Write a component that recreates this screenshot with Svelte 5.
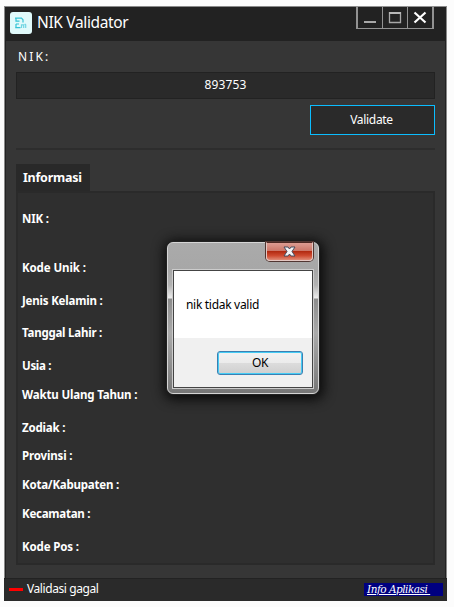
<script>
  const fields = [
    { label: 'NIK :', gap: 18, w: -0.2 },
    { label: 'Kode Unik :', gap: 33, w: -0.1 },
    { label: 'Jenis Kelamin :', gap: 17, w: -0.2 },
    { label: 'Tanggal Lahir :', gap: 16, w: -0.23 },
    { label: 'Usia :', gap: 17, w: -0.3 },
    { label: 'Waktu Ulang Tahun :', gap: 13, w: -0.16 },
    { label: 'Zodiak :', gap: 17, w: -0.2 },
    { label: 'Provinsi :', gap: 12, w: -0.15 },
    { label: 'Kota/Kabupaten :', gap: 13, w: -0.22 },
    { label: 'Kecamatan :', gap: 13, w: -0.25 },
    { label: 'Kode Pos :', gap: 17, w: -0.15 }
  ];
  let nik = $state('893753');
</script>

<div class="screen">
  <main class="window">
    <header class="titlebar">
      <span class="logo">
        <svg width="22" height="22" viewBox="0 0 22 22" fill="none">
          <path d="M5 6.2h6.5l1.5 1.6v2.7M6 6v3.2h3.5M6 12v3.5M5.2 15.6h5.3M6 12h3" stroke="#35c3d5" stroke-width="1.2" />
          <path d="M11.5 16v-3.2h2.2V16M15.7 16v-3.2l-1-1" stroke="#6fd5e2" stroke-width="1.2" />
        </svg>
      </span>
      <h1>NIK Validator</h1>
      <div class="controls">
        <button aria-label="Minimize"><svg width="24" height="21"><path d="M6 15h12" stroke="#a8a8a8" stroke-width="2" /></svg></button>
        <button aria-label="Maximize"><svg width="24" height="21"><path d="M6.5 5v10.5h11V5" stroke="#a8a8a8" stroke-width="1.3" fill="none" /><path d="M6 6h12" stroke="#b8b8b8" stroke-width="2" /></svg></button>
        <button aria-label="Close"><svg width="24" height="21"><path d="M6.5 5.5l11 10M17.5 5.5l-11 10" stroke="#fff" stroke-width="2.2" /></svg></button>
      </div>
    </header>

    <section class="body">
      <label for="nik">NIK:</label>
      <input id="nik" bind:value={nik} />
      <button class="validate"><span>Validate</span></button>
      <hr />
      <div class="tab"><span>Informasi</span></div>
      <div class="panel">
        {#each fields as f}
          <div class="row" style="margin-top:{f.gap}px"><span style="letter-spacing:{f.w}px">{f.label}</span></div>
        {/each}
      </div>
    </section>

    <footer>
      <i class="dash"></i>
      <span class="status">Validasi gagal</span>
      <a href="#info">Info Aplikasi&nbsp;</a>
    </footer>
  </main>

  <div class="dialog" role="alertdialog">
    <button class="dialog-close" aria-label="Close">
      <svg width="13" height="11" viewBox="0 0 13 11"><path d="M1 1h4l1.5 2L8 1h4L9 5.5l3 4.5H8L6.5 8 5 10H1l3-4.5z" fill="#f3f4f6" stroke="#474b5d" /></svg>
    </button>
    <div class="client">
      <p>nik tidak valid</p>
      <div class="actions"><button>OK</button></div>
    </div>
  </div>
</div>

<style>
  :global(body) { background: #fcfcfc; }
  * { box-sizing: border-box; }
  .screen {
    width: 454px; height: 607px; position: relative; overflow: hidden;
    padding: 6px 7px 6px 4px; background: #fcfcfc;
    font: 12px/16px "Noto Sans", "Open Sans", sans-serif; color: #fff;
  }
  button, input { font: inherit; color: inherit; margin: 0; padding: 0; border-radius: 0; }
  .window {
    width: 443px; height: 595px; display: flex; flex-direction: column;
    background: #363636; border: 1px solid #8a8a8a; border-bottom: 0;
  }
  .titlebar {
    height: 34px; flex: none; display: flex; align-items: flex-start;
    background: #222; padding-left: 5px;
  }
  .logo { width: 22px; height: 22px; margin-top: 5px; border-radius: 3px; background: #e1fafb; overflow: hidden; }
  .logo svg { display: block; }
  h1 { margin: 5px 0 0 5px; font-size: 15.5px; line-height: 21px; font-weight: 400; letter-spacing: -0.35px; }
  .controls {
    margin: -1px 12px 0 auto; display: flex; height: 23px;
    border: 1px solid #929292; border-right-width: 2px; border-bottom-width: 2px; border-left-width: 2px;
  }
  .controls button { width: 24px; height: 21px; border: 0; background: #222; }
  .controls button + button { border-left: 1px solid #929292; width: 25px; }
  .controls svg { display: block; }
  .body {
    flex: 1; display: flex; flex-direction: column; padding: 0 10px;
    border: solid #222; border-width: 0 1px;
  }
  label { margin: 8px 0 0 2px; height: 16px; letter-spacing: 2.1px; font-size: 12px; }
  input {
    width: 419px; height: 27px; margin-top: 7px; text-align: center; outline: 0;
    background: #2a2a2a; border: 1px solid #222; letter-spacing: 0.1px;
    padding-bottom: 2px;
  }
  .validate {
    align-self: flex-end; width: 125px; height: 30px; margin-top: 6px;
    padding-right: 2px; background: #2a2a2a; border: 1px solid #0bbdff; letter-spacing: -0.3px;
  }
  hr { width: 419px; height: 2px; margin: 13px 0 0; border: 0; background: #2d2d2d; }
  .tab {
    width: 74px; height: 27px; margin-top: 14px; padding: 6px 0 0 7px;
    background: #292929; font-weight: 700; font-size: 12.5px; letter-spacing: -0.25px;
  }
  .panel {
    width: 419px; height: 374px; padding-left: 4px;
    background: #2f2f2f; border: 2px solid #2a2a2a; font-weight: 700; font-size: 11.5px;
  }
  .row { height: 16px; white-space: nowrap; }
  footer {
    height: 23px; flex: none; margin: 0 -1px; display: flex; align-items: center;
    background: #2a2a2a; border-top: 1px solid #222; padding: 0 4px 0 5px;
  }
  .dash { width: 14px; height: 3px; background: #f00; margin-top: -2px; }
  .status { margin: -2px 0 0 4px; letter-spacing: -0.42px; }
  a {
    margin: -1px 0 0 auto; width: 79px; height: 13px; padding-left: 3px; background: #000080;
    color: #fff; font: italic 10.5px/13px "DejaVu Serif", serif; letter-spacing: -0.5px;
    white-space: nowrap;
  }
  .dialog {
    position: absolute; left: 167px; top: 242px; width: 152px; height: 152px;
    border: 1px solid #d5d5d5; border-radius: 6px; color: #000;
    background: linear-gradient(#aaa 0, #a7a7a7 28px, #b2b2b2 42px, #ececec 55px, #8c8c8c 56px, #aaa 90px, #777 100%);
    box-shadow: 0 0 0 1px #222, 1px 2px 12px 4px #0c0c0c;
    padding: 27px 5px 5px;
  }
  .dialog-close {
    position: absolute; right: 5px; top: -1px; width: 47px; height: 19px;
    display: flex; align-items: center; justify-content: center;
    border: 1px solid #e4c7c2; border-top-color: #4c2924; border-radius: 0 0 4px 4px;
    background: linear-gradient(#dd9c92 0, #cb7567 48%, #b32b12 50%, #cf4b31 75%, #df8c78 100%);
    box-shadow: 0 0 0 1px #513632;
  }
  .dialog-close svg { margin-top: -1px; }
  .client {
    width: 140px; height: 118px; border: 1px solid #444; outline: 1px solid #ccc;
    background: #fff; display: flex; flex-direction: column;
  }
  p { margin: 26px 0 0 12px; height: 41px; letter-spacing: -0.3px; }
  .actions { flex: 1; background: #f0f0f0; display: flex; justify-content: flex-end; padding: 13px 9px 0 0; }
  .actions button {
    width: 86px; height: 24px; border: 1px solid #3c7fb1; border-radius: 3px;
    background: linear-gradient(#f2f2f2 0, #ebebeb 49%, #dcdcdc 50%, #cfcfcf 100%);
    box-shadow: inset 0 0 0 1px #45ccf5; line-height: 20px; letter-spacing: -0.3px;
  }
</style>
